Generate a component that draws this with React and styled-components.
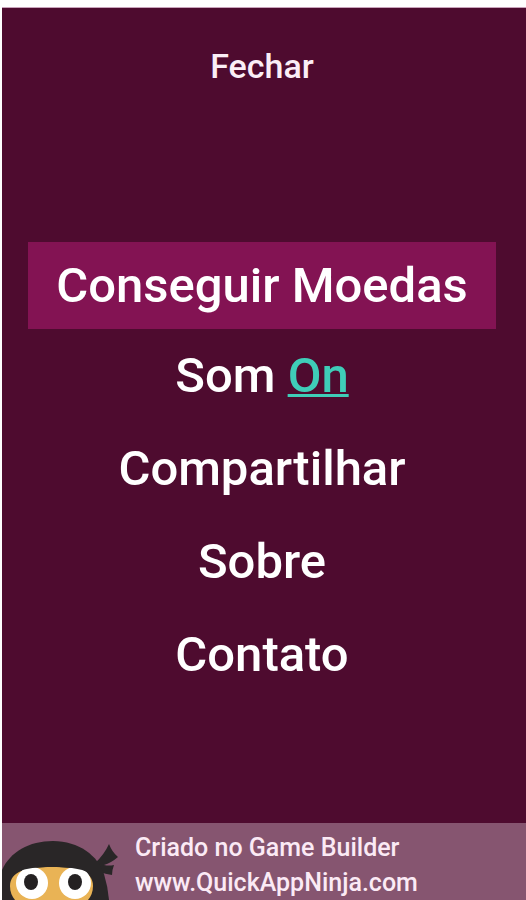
import React from "react";
import styled, { createGlobalStyle, css } from "styled-components";

const GlobalStyle = createGlobalStyle`
  * { box-sizing: border-box; }
  body {
    margin: 0;
    background: #fff;
    font-family: Roboto, "Liberation Sans", sans-serif;
    font-weight: 500;
    color: #fff;
  }
`;

const Page = styled.div`
  min-height: 100vh;
  padding: 7px 0 0 2px;
  display: flex;
  flex-direction: column;
`;

const Screen = styled.main`
  flex: 1;
  display: flex;
  flex-direction: column;
  background: #4e0b2f;
  border-top: 1px solid #c9a3bb;
`;

const Header = styled.header`
  display: flex;
  justify-content: center;
  padding: 38px 30px 0 26px;
`;

const buttonReset = css`
  border: 0;
  padding: 0;
  background: none;
  color: inherit;
  font: inherit;
  cursor: pointer;
`;

const CloseButton = styled.button`
  ${buttonReset}
  color: #fbeef6;
  font-size: 34px;
  line-height: 40px;
`;

const Menu = styled.nav`
  display: flex;
  flex-direction: column;
  margin: 156px 30px 40px 26px;
`;

const MenuButton = styled.button`
  ${buttonReset}
  font-size: 49px;
  line-height: ${({ $highlighted }) => ($highlighted ? "87px" : "93px")};
  background: ${({ $highlighted }) => ($highlighted ? "#831353" : "none")};
`;

const State = styled.span`
  color: #3fcdb8;
  text-decoration: underline;
  text-decoration-thickness: 3px;
  text-underline-offset: 2px;
  text-decoration-skip-ink: none;
`;

const Footer = styled.footer`
  display: flex;
  margin-top: auto;
  height: 77px;
  overflow: hidden;
  background: #865570;
`;

const Ninja = styled.svg`
  flex: none;
  width: 118px;
  height: 77px;
`;

const Credit = styled.a`
  margin-left: 15px;
  padding-top: 7px;
  color: #fbeaf5;
  font-size: 25px;
  line-height: 35px;
  text-decoration: none;
  white-space: nowrap;
`;

const CreditLine = styled.span`
  display: block;
`;

function NinjaLogo() {
  return (
    <Ninja viewBox="0 0 118 77" aria-hidden="true">
      <path d="M93 40 Q102 32 107 21 Q110 29 116 34 Q109 40 102 42 Q107 43 112 42 Q110 47 110 52 Q103 51 98 49Z" fill="#292627" />
      <path d="M0 47 C8 29 27 18 51 18 C77 18 96 33 102 51 Q106 64 107 77 H0Z" fill="#292627" />
      <path d="M8 63 C8 48 25 44 50 44 C75 44 91 48 91 63 Q91 71 86 77 H13 Q8 71 8 63Z" fill="#e9b355" />
      <ellipse cx="30" cy="60" rx="16" ry="16" fill="#fff" />
      <ellipse cx="73" cy="60" rx="16" ry="16" fill="#fff" />
      <ellipse cx="29" cy="59" rx="7" ry="8" fill="#242122" />
      <ellipse cx="73" cy="59" rx="7" ry="8" fill="#242122" />
      <path d="M8 53 C16 46 31 44 50 44 C70 44 84 46 91 53 L91 36 H8Z" fill="#292627" />
    </Ninja>
  );
}

export default function App() {
  return (
    <Page>
      <GlobalStyle />
      <Screen>
        <Header>
          <CloseButton type="button">Fechar</CloseButton>
        </Header>
        <Menu>
          <MenuButton type="button" $highlighted>Conseguir Moedas</MenuButton>
          <MenuButton type="button">
            Som <State>On</State>
          </MenuButton>
          <MenuButton type="button">Compartilhar</MenuButton>
          <MenuButton type="button">Sobre</MenuButton>
          <MenuButton type="button">Contato</MenuButton>
        </Menu>
        <Footer>
          <NinjaLogo />
          <Credit href="#quickappninja">
            <CreditLine>Criado no Game Builder</CreditLine>
            <CreditLine>www.QuickAppNinja.com</CreditLine>
          </Credit>
        </Footer>
      </Screen>
    </Page>
  );
}
